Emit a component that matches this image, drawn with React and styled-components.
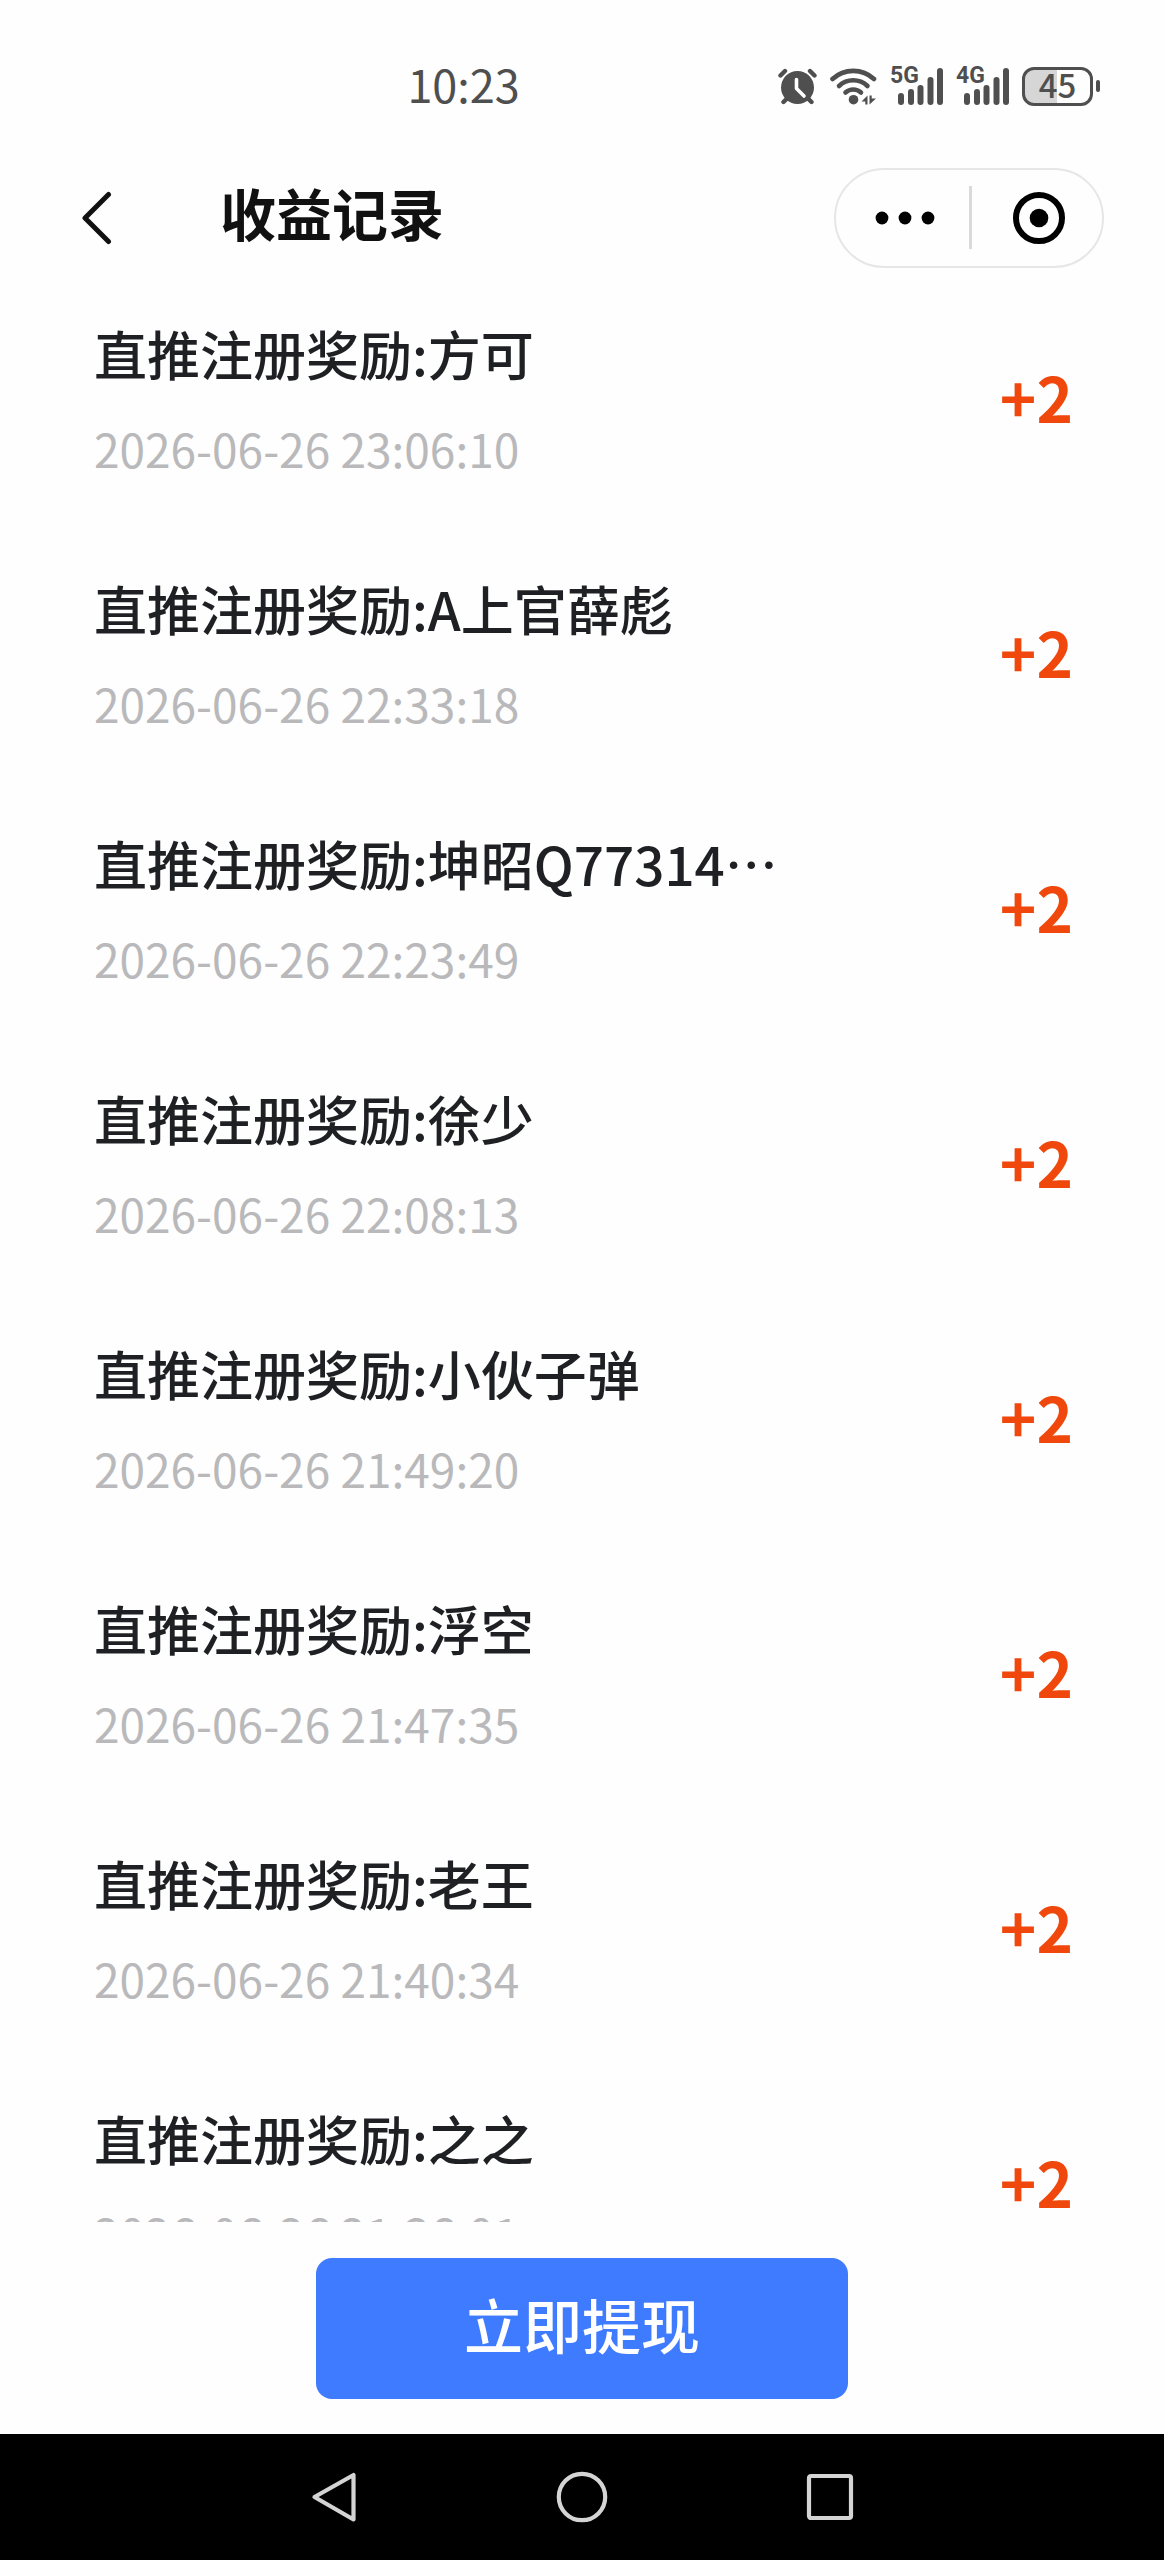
import React from 'react';

import styled, { createGlobalStyle } from 'styled-components';

const RECORDS = [
  { name: '方可', time: '2026-06-26 23:06:10', amount: 2 },
  { name: 'A上官薛彪', time: '2026-06-26 22:33:18', amount: 2 },
  { name: '坤昭Q77314⋯', time: '2026-06-26 22:23:49', amount: 2 },
  { name: '徐少', time: '2026-06-26 22:08:13', amount: 2 },
  { name: '小伙子弹', time: '2026-06-26 21:49:20', amount: 2 },
  { name: '浮空', time: '2026-06-26 21:47:35', amount: 2 },
  { name: '老王', time: '2026-06-26 21:40:34', amount: 2 },
  { name: '之之', time: '2026-06-26 21:36:01', amount: 2 },
];

const GlobalStyle = createGlobalStyle`
  * {
    box-sizing: border-box;
  }

  body {
    margin: 0;
    background: #fefefe;
    font-family: 'Noto Sans CJK SC', 'Noto Sans', sans-serif;
  }

  button {
    padding: 0;
    border: 0;
    background: none;
    font-family: inherit;
    cursor: pointer;
  }

  svg {
    display: block;
  }
`;

const Screen = styled.div`
  display: flex;
  flex-direction: column;
  height: 100vh;
`;

const StatusBar = styled.div`
  display: flex;
  flex: none;
  align-items: center;
  justify-content: space-between;
  height: 150px;
  padding: 22px 64px 0 35%;
  color: #4f4f4f;
`;

const Clock = styled.time`
  padding-bottom: 4px;
  font-size: 45px;
  line-height: 56px;
`;

const StatusIcons = styled.div`
  display: flex;
  align-items: center;
  gap: 13px;
`;

const SignalBox = styled.div`
  position: relative;
`;

const SignalLabel = styled.span`
  position: absolute;
  top: -6px;
  left: 0;
  font-family: 'Liberation Sans Narrow', Roboto, sans-serif;
  font-size: 23px;
  font-weight: 700;
  line-height: 28px;
`;

const BatteryBox = styled.div`
  display: flex;
  align-items: center;
  gap: 3px;

  &::after {
    content: '';
    width: 4px;
    height: 12px;
    border-radius: 2px;
    background: #4f4f4f;
  }
`;

const BatteryBody = styled.div`
  display: flex;
  align-items: center;
  justify-content: center;
  width: 71px;
  height: 39px;
  padding-bottom: 4px;
  border: 3px solid #4f4f4f;
  border-radius: 12px;
  background: linear-gradient(
    to right,
    #d6d6d6 ${p => p.$level}%,
    transparent ${p => p.$level}%
  );
  font-size: 33px;
  font-weight: 500;
  line-height: 29px;
`;

const Header = styled.header`
  display: flex;
  flex: none;
  align-items: center;
  height: 135px;
  padding: 0 60px 0 64px;
`;

const BackButton = styled.button`
  display: flex;
  align-items: center;
  justify-content: center;
  width: 66px;
  height: 80px;
`;

const PageTitle = styled.h1`
  flex: 1;
  margin: 0 0 0 90px;
  padding-bottom: 12px;
  color: #111;
  font-size: 56px;
  font-weight: 700;
  line-height: 64px;
`;

const Capsule = styled.div`
  display: flex;
  align-items: center;
  width: 270px;
  height: 100px;
  padding-left: 2px;
  border: 2px solid #e6e6e6;
  border-radius: 50px;
`;

const CapsuleButton = styled.button`
  display: flex;
  flex: 1;
  align-items: center;
  justify-content: center;
  height: 100%;
  padding-left: 4px;
`;

const CapsuleDivider = styled.span`
  width: 3px;
  height: 63px;
  background: #dadada;
`;

const RecordList = styled.ul`
  flex: 1;
  min-height: 0;
  margin: 0;
  padding: 0 91px 0 94px;
  overflow: hidden;
  list-style: none;
`;

const RecordRow = styled.li`
  display: flex;
  align-items: center;
  justify-content: space-between;
  padding: 30px 0 63px;
`;

const RecordInfo = styled.div`
  display: flex;
  flex-direction: column;
  gap: 28px;
`;

const RecordTitle = styled.span`
  color: #1f2023;
  font-size: 53px;
  font-weight: 500;
  line-height: 76px;
`;

const RecordTime = styled.time`
  color: #b9b9bb;
  font-size: 46px;
  line-height: 58px;
`;

const Amount = styled.span`
  color: #f0480c;
  font-size: 62px;
  font-weight: 700;
  line-height: 76px;
`;

const Footer = styled.footer`
  display: flex;
  flex: none;
  justify-content: center;
  padding: 36px 0 35px;
`;

const WithdrawButton = styled.button`
  width: 532px;
  height: 141px;
  padding-bottom: 10px;
  border-radius: 16px;
  background: #3f7bff;
  color: #fff;
  font-size: 59px;
  font-weight: 500;
  line-height: 76px;
`;

const NavBar = styled.nav`
  display: flex;
  flex: none;
  align-items: center;
  justify-content: center;
  gap: 188px;
  height: 126px;
  background: #000;
`;

const NavButton = styled.button`
  display: flex;
  align-items: center;
  justify-content: center;
  width: 60px;
  height: 60px;
`;

const AlarmIcon = () => (
  <svg width="39" height="37" viewBox="0 0 39 37" fill="none">
    <g stroke="#4f4f4f" strokeWidth="4.4" strokeLinecap="round">
      <path d="M2.500 7.500 7 3M36.500 7.500 32 3M9 30.500 5.500 34M30 30.500 33.500 34" />
    </g>
    <circle cx="19.500" cy="19.500" r="16.500" fill="#4f4f4f" />
    <path
      d="M18.500 11.500v9l7.500 7.500"
      stroke="#fff"
      strokeWidth="3.600"
      strokeLinecap="round"
      strokeLinejoin="round"
    />
  </svg>
);

const WifiIcon = () => (
  <svg width="47" height="37" viewBox="0 0 47 37" fill="none">
    <g stroke="#4f4f4f" strokeWidth="4.600" strokeLinecap="round">
      <path d="M2.500 11C14 .1 32.500 .1 44 11" />
      <path d="M9 18c8-7.600 20.500-7.600 28.500 0" />
      <path d="M15.500 24.500c4.500-4 11-4 15.500 0" />
    </g>
    <circle cx="23.500" cy="31.700" r="4.800" fill="#4f4f4f" />
    <path d="M37.500 27.500v9h-2.200v-3H31.500zM39.500 36.500v-9h2.200v3h4.300z" fill="#4f4f4f" />
  </svg>
);

const Signal = ({ label }) => (
  <SignalBox>
    <SignalLabel>{label}</SignalLabel>
    <svg width="53" height="37" viewBox="0 0 53 37" fill="#4f4f4f">
      <rect x="8" y="25" width="6" height="12" rx="3" />
      <rect x="18" y="21" width="6" height="16" rx="3" />
      <rect x="27.500" y="17" width="6" height="20" rx="3" />
      <rect x="37.500" y="9" width="6" height="28" rx="3" />
      <rect x="47" y="0" width="6" height="37" rx="3" />
    </svg>
  </SignalBox>
);

const Battery = ({ level }) => (
  <BatteryBox>
    <BatteryBody $level={level + 5}>{level}</BatteryBody>
  </BatteryBox>
);

const Record = ({ name, time, amount }) => (
  <RecordRow>
    <RecordInfo>
      <RecordTitle>直推注册奖励:{name}</RecordTitle>
      <RecordTime>{time}</RecordTime>
    </RecordInfo>
    <Amount>+{amount}</Amount>
  </RecordRow>
);

const App = () => {
  return (
    <>
      <GlobalStyle />
      <Screen lang="zh-CN">
        <StatusBar>
          <Clock>10:23</Clock>
          <StatusIcons>
            <AlarmIcon />
            <WifiIcon />
            <Signal label="5G" />
            <Signal label="4G" />
            <Battery level={45} />
          </StatusIcons>
        </StatusBar>

        <Header>
          <BackButton aria-label="返回">
            <svg width="30" height="54" viewBox="0 0 30 54" fill="none">
              <path
                d="M26.500 3.500 3 27l23.500 23.500"
                stroke="#111"
                strokeWidth="5"
                strokeLinecap="round"
                strokeLinejoin="round"
              />
            </svg>
          </BackButton>
          <PageTitle>收益记录</PageTitle>
          <Capsule>
            <CapsuleButton aria-label="更多">
              <svg width="60" height="14" viewBox="0 0 60 14">
                <circle cx="7" cy="7" r="6.400" />
                <circle cx="30" cy="7" r="6.400" />
                <circle cx="53" cy="7" r="6.400" />
              </svg>
            </CapsuleButton>
            <CapsuleDivider />
            <CapsuleButton aria-label="关闭">
              <svg width="54" height="54" viewBox="0 0 54 54">
                <circle cx="27" cy="27" r="23" fill="none" stroke="#000" strokeWidth="6" />
                <circle cx="27" cy="27" r="9.300" />
              </svg>
            </CapsuleButton>
          </Capsule>
        </Header>

        <RecordList>
          {RECORDS.map(item => (
            <Record key={item.time} {...item} />
          ))}
        </RecordList>

        <Footer>
          <WithdrawButton>立即提现</WithdrawButton>
        </Footer>

        <NavBar>
          <NavButton aria-label="后退">
            <svg width="46" height="52" viewBox="0 0 46 52" fill="none">
              <path
                d="M42.500 4v44.500L3.500 26z"
                stroke="#d4d4d4"
                strokeWidth="4.200"
                strokeLinejoin="round"
              />
            </svg>
          </NavButton>
          <NavButton aria-label="主页">
            <svg width="52" height="52" viewBox="0 0 52 52" fill="none">
              <circle cx="26" cy="26" r="23.200" stroke="#d4d4d4" strokeWidth="4.200" />
            </svg>
          </NavButton>
          <NavButton aria-label="最近任务">
            <svg width="48" height="48" viewBox="0 0 48 48" fill="none">
              <rect x="3" y="3" width="42" height="42" rx="2" stroke="#d4d4d4" strokeWidth="4.200" />
            </svg>
          </NavButton>
        </NavBar>
      </Screen>
    </>
  );
};

export default App;
